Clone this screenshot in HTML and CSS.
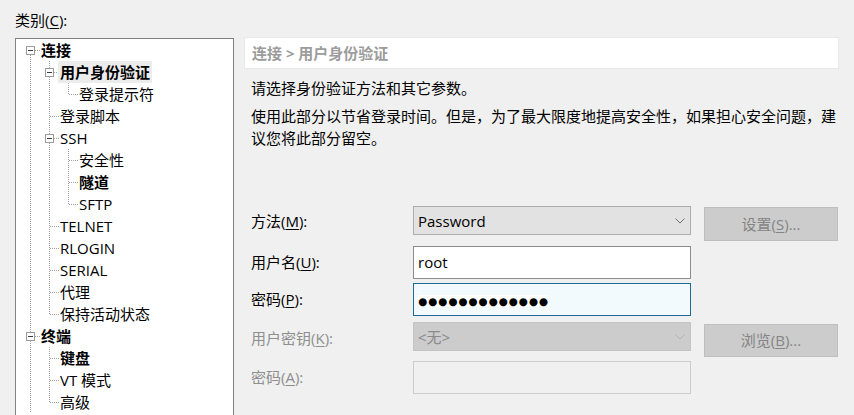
FILE: index.html
```html
<!DOCTYPE html>
<html lang="zh-CN">
<head>
<meta charset="utf-8">
<title>会话属性</title>
<link rel="stylesheet" href="styles.css">
</head>
<body>
<div class="dialog">
  <div class="left">
    <div class="cat-label">类别(<u>C</u>):</div>
    <div class="tree">
      <div class="row"><span class="g exp first"><i class="box"></i></span><span class="lbl b">连接</span></div>
      <div class="row"><span class="g v"></span><span class="g exp"><i class="box"></i></span><span class="lbl b sel">用户身份验证</span></div>
      <div class="row"><span class="g v"></span><span class="g v"></span><span class="g l"></span><span class="lbl">登录提示符</span></div>
      <div class="row"><span class="g v"></span><span class="g t"></span><span class="lbl">登录脚本</span></div>
      <div class="row"><span class="g v"></span><span class="g exp"><i class="box"></i></span><span class="lbl">SSH</span></div>
      <div class="row"><span class="g v"></span><span class="g v"></span><span class="g t"></span><span class="lbl">安全性</span></div>
      <div class="row"><span class="g v"></span><span class="g v"></span><span class="g t"></span><span class="lbl b">隧道</span></div>
      <div class="row"><span class="g v"></span><span class="g v"></span><span class="g l"></span><span class="lbl">SFTP</span></div>
      <div class="row"><span class="g v"></span><span class="g t"></span><span class="lbl">TELNET</span></div>
      <div class="row"><span class="g v"></span><span class="g t"></span><span class="lbl">RLOGIN</span></div>
      <div class="row"><span class="g v"></span><span class="g t"></span><span class="lbl">SERIAL</span></div>
      <div class="row"><span class="g v"></span><span class="g t"></span><span class="lbl">代理</span></div>
      <div class="row"><span class="g v"></span><span class="g l"></span><span class="lbl">保持活动状态</span></div>
      <div class="row"><span class="g exp"><i class="box"></i></span><span class="lbl b">终端</span></div>
      <div class="row"><span class="g v"></span><span class="g t"></span><span class="lbl b">键盘</span></div>
      <div class="row"><span class="g v"></span><span class="g t"></span><span class="lbl">VT 模式</span></div>
      <div class="row"><span class="g v"></span><span class="g l"></span><span class="lbl">高级</span></div>
    </div>
  </div>

  <div class="right">
    <div class="crumb">连接 &gt; 用户身份验证</div>
    <div class="desc">请选择身份验证方法和其它参数。</div>
    <div class="para">使用此部分以节省登录时间。但是，为了最大限度地提高安全性，如果担心安全问题，建<br>议您将此部分留空。</div>

    <div class="form">
      <div class="frow r1">
        <div class="flabel h30">方法(<u>M</u>):</div>
        <div class="select h29">
          <span class="sel-text">Password</span>
          <svg class="chev" width="10" height="6" viewBox="0 0 10 6"><path d="M0.5 0.5 L5 5 L9.5 0.5" fill="none" stroke="#6d6d6d" stroke-width="1"/></svg>
        </div>
        <div class="btn">设置(<u>S</u>)...</div>
      </div>
      <div class="frow r2">
        <div class="flabel h33">用户名(<u>U</u>):</div>
        <div class="input">root</div>
      </div>
      <div class="frow r3">
        <div class="flabel h33">密码(<u>P</u>):</div>
        <div class="input focus"><span class="dots">●●●●●●●●●●●●●</span></div>
      </div>
      <div class="frow r4">
        <div class="flabel h32 dis">用户密钥(<u>K</u>):</div>
        <div class="select h29 disabled">
          <span class="sel-text">&lt;无&gt;</span>
          <svg class="chev" width="10" height="6" viewBox="0 0 10 6"><path d="M0.5 0.5 L5 5 L9.5 0.5" fill="none" stroke="#b4b4b4" stroke-width="1"/></svg>
        </div>
        <div class="btn b2">浏览(<u>B</u>)...</div>
      </div>
      <div class="frow r5">
        <div class="flabel h33 dis">密码(<u>A</u>):</div>
        <div class="input disabled"></div>
      </div>
    </div>
  </div>
</div>
</body>
</html>
```

FILE: styles.css
```css
:root {
  --dv: repeating-linear-gradient(to bottom, #a2a2a2 0 1px, transparent 1px 2px);
  --dh: repeating-linear-gradient(to right, #a2a2a2 0 1px, transparent 1px 2px);
}

html, body {
  margin: 0;
  padding: 0;
  background: #f0f0f0;
  overflow: hidden;
}

body {
  font-family: "Open Sans", "Noto Sans CJK SC", sans-serif;
  font-size: 15px;
  color: #000;
  width: 854px;
  height: 415px;
}

u {
  text-decoration: underline;
  text-underline-offset: 2px;
  text-decoration-thickness: 1px;
}

.dialog {
  display: flex;
  gap: 11px;
  padding-left: 15px;
  height: 415px;
}

/* ---------- left: category tree ---------- */
.left {
  width: 219px;
  flex: none;
  display: flex;
  flex-direction: column;
}

.cat-label {
  height: 38px;
  line-height: 40px;
  white-space: nowrap;
  flex: none;
}

.tree {
  box-sizing: border-box;
  flex: 1;
  min-height: 0;
  background: #fff;
  border: 1px solid #828282;
  border-bottom: none;
  padding-left: 5px;
  overflow: hidden;
}

.row {
  display: flex;
  height: 22px;
}

.g {
  width: 19px;
  height: 22px;
  flex: none;
  display: block;
}

.g.v {
  background: var(--dv) 9px 0 / 1px 22px no-repeat;
}

.g.t {
  background: var(--dh) 10px 11px / 9px 1px no-repeat,
              var(--dv) 9px 0 / 1px 22px no-repeat;
}

.g.l {
  background: var(--dh) 10px 11px / 9px 1px no-repeat,
              var(--dv) 9px 0 / 1px 12px no-repeat;
}

.g.exp {
  background: var(--dh) 14px 11px / 5px 1px no-repeat,
              var(--dv) 9px 0 / 1px 22px no-repeat;
}

.g.exp.first {
  background: var(--dh) 14px 11px / 5px 1px no-repeat,
              var(--dv) 9px 12px / 1px 10px no-repeat;
}

.box {
  display: block;
  box-sizing: border-box;
  width: 9px;
  height: 9px;
  margin: 7px 0 0 5px;
  border: 1px solid #9b9b9b;
  background: linear-gradient(#3c3c3c, #3c3c3c) 1px 3px / 5px 1px no-repeat, #fff;
}

.lbl {
  height: 22px;
  line-height: 22px;
  padding: 0 2px;
  margin-left: -1px;
  white-space: nowrap;
}

.lbl.b {
  font-weight: bold;
}

.lbl.sel {
  background: #ececec;
}

/* ---------- right: settings ---------- */
.right {
  width: 593px;
  flex: none;
  padding-top: 38px;
}

.crumb {
  height: 30px;
  line-height: 30px;
  background: #fff;
  padding-left: 7px;
  color: #9c9c9c;
  font-weight: bold;
  box-shadow: 0 0 0 1px #e9e9e9;
}

.desc {
  margin-top: 9px;
  padding-left: 6px;
  line-height: 22px;
  white-space: nowrap;
}

.para {
  margin-top: 6px;
  padding-left: 6px;
  line-height: 22px;
  white-space: nowrap;
}

.form {
  margin-top: 57px;
  padding-left: 6px;
}

.frow {
  display: flex;
  align-items: flex-start;
}

.r1 { height: 40px; }
.r2 { height: 37px; }
.r3 { height: 39px; }
.r4 { height: 39px; }
.r5 { height: 33px; }

.flabel {
  width: 162px;
  flex: none;
  white-space: nowrap;
}

.flabel.h30 { line-height: 30px; }
.flabel.h33 { line-height: 33px; }
.flabel.h32 { line-height: 32px; }

.flabel.dis {
  color: #8e8e8e;
}

.select {
  box-sizing: border-box;
  width: 278px;
  flex: none;
  display: flex;
  align-items: center;
  justify-content: space-between;
  border: 1px solid #adadad;
  background: #e2e2e2;
  padding: 0 5px 0 4px;
}

.select.h29 { height: 29px; }

.select.disabled {
  background: #cccccc;
  border-color: #c4c4c4;
  color: #8a8a8a;
}

.sel-text {
  white-space: nowrap;
}

.chev {
  display: block;
  flex: none;
}

.input {
  box-sizing: border-box;
  width: 278px;
  height: 33px;
  flex: none;
  border: 1px solid #8c8c8c;
  background: #fff;
  padding-left: 4px;
  line-height: 30px;
  white-space: nowrap;
}

.input.focus {
  border-color: #1d6a9b;
  background: #f3fafd;
}

.input.disabled {
  border-color: #cdcdcd;
  background: #f0f0f0;
}

.dots {
  font-family: "DejaVu Sans", sans-serif;
  font-size: 10.5px;
  letter-spacing: 0.9px;
  background: #fff;
}

.btn {
  box-sizing: border-box;
  width: 134px;
  height: 34px;
  flex: none;
  margin-left: 13px;
  margin-top: 1px;
  border: 1px solid #bfbfbf;
  background: #cccccc;
  color: #848484;
  text-align: center;
  line-height: 32px;
  white-space: nowrap;
}

.btn.b2 {
  margin-top: 2px;
  height: 33px;
  line-height: 31px;
}
```
